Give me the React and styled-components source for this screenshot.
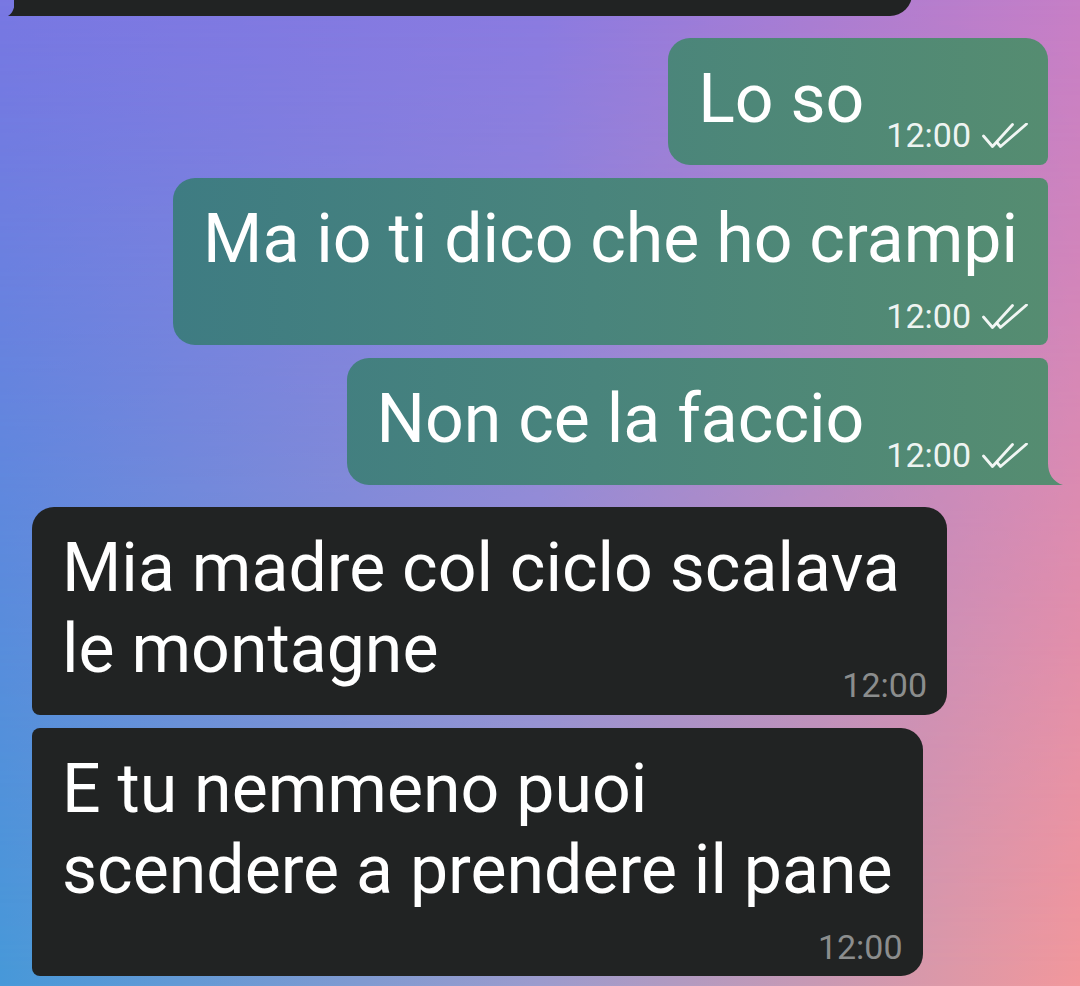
import React from "react";
import styled, { createGlobalStyle, css } from "styled-components";

const GlobalStyle = createGlobalStyle`
  html, body {
    margin: 0;
    padding: 0;
    height: 100%;
  }
  body {
    font-family: Roboto, "Noto Sans", sans-serif;
    overflow: hidden;
  }
`;

// outgoing bubbles share one gradient fixed to the screen
const OUT_BG = "linear-gradient(90deg, #3d7b83 12%, #49847c 55%, #568d70 100%) fixed";
const IN_BG = "#212323";

const Chat = styled.div`
  position: relative;
  height: 100vh;
  box-sizing: border-box;
  display: flex;
  flex-direction: column;
  gap: 22px;
  padding: 0 32px;
  overflow: hidden;
  background: linear-gradient(90deg, #4799d9 0%, #9c9ccd 50%, #f2989c 100%);

  &::before {
    content: "";
    position: absolute;
    inset: 0;
    background: linear-gradient(90deg, #7877e2 0%, #8a7ae0 50%, #c67ec6 100%);
    -webkit-mask-image: linear-gradient(180deg, #000 0%, rgba(0, 0, 0, 0.55) 45%, transparent 100%);
    mask-image: linear-gradient(180deg, #000 0%, rgba(0, 0, 0, 0.55) 45%, transparent 100%);
  }
`;

const Group = styled.div`
  position: relative;
  z-index: 1;
  display: flex;
  flex-direction: column;
  gap: 13px;
  align-items: ${(p) => (p.$out ? "flex-end" : "flex-start")};
`;

const Bubble = styled.div`
  position: relative;
  display: flow-root;
  box-sizing: border-box;
  max-width: 915px;
  padding: 21px 30px 0;
  border-radius: ${(p) => p.$radius};
  background: ${(p) => (p.$out ? OUT_BG : IN_BG)};
  color: #fff;
  font-size: 68px;
  line-height: 81px;

  ${(p) =>
    p.$tail &&
    css`
      &::after {
        content: "";
        position: absolute;
        bottom: 0;
        right: -15px;
        width: 16px;
        height: 22px;
        background: ${OUT_BG};
        clip-path: path("M1 0 C1 11 6 19 16 22 L0 22 Z");
      }
    `}
`;

const TopBubble = styled.div`
  position: relative;
  width: 898px;
  height: 60px;
  margin: -44px 0 0 -18px;
  border-radius: 22px 22px 22px 0;
  background: ${IN_BG};

  &::after {
    content: "";
    position: absolute;
    bottom: 0;
    left: -6px;
    width: 7px;
    height: 16px;
    background: ${IN_BG};
    clip-path: path("M7 0 C7 8 4 14 0 16 L7 16 Z");
  }
`;

const Text = styled.span`
  color: #fff;
`;

const Meta = styled.span`
  display: flex;
  align-items: center;
  justify-content: flex-end;
  gap: 11px;
  height: 24px;
  font-size: 34px;
  line-height: 24px;
  color: ${(p) => (p.$out ? "rgba(255, 255, 255, 0.92)" : "#8b8d8d")};
  ${(p) =>
    p.$below
      ? css`
          margin: 24px -10px 17px 0;
        `
      : css`
          float: right;
          margin: 64px -10px 18px 22px;
        `}
`;

const Checks = () => (
  <svg width="46" height="25" viewBox="0 0 46 25" fill="none">
    <path
      d="M1.5 13 L10.5 23.5 L30.5 1.5"
      stroke="currentColor"
      strokeWidth="2.8"
      strokeLinecap="round"
      strokeLinejoin="round"
    />
    <path
      d="M15.5 20 L18.5 23.5 L44.5 1"
      stroke="currentColor"
      strokeWidth="2.8"
      strokeLinecap="round"
      strokeLinejoin="round"
    />
  </svg>
);

const Message = ({ out, below, radius, tail, children }) => (
  <Bubble $out={out} $radius={radius} $tail={tail}>
    <Text>{children}</Text>
    <Meta $out={out} $below={below}>
      <span>12:00</span>
      {out && <Checks />}
    </Meta>
  </Bubble>
);

export default function App() {
  return (
    <>
      <GlobalStyle />
      <Chat>
        <Group>
          <TopBubble />
        </Group>
        <Group $out>
          <Message out radius="22px 22px 8px 22px">
            Lo so
          </Message>
          <Message out below radius="22px 8px 8px 22px">
            Ma io ti dico che ho crampi
          </Message>
          <Message out tail radius="22px 8px 0 22px">
            Non ce la faccio
          </Message>
        </Group>
        <Group>
          <Message radius="22px 22px 22px 8px">
            Mia madre col ciclo scalava le montagne
          </Message>
          <Message below radius="8px 22px 22px 8px">
            E tu nemmeno puoi
            <br />
            scendere a prendere il pane
          </Message>
        </Group>
      </Chat>
    </>
  );
}
